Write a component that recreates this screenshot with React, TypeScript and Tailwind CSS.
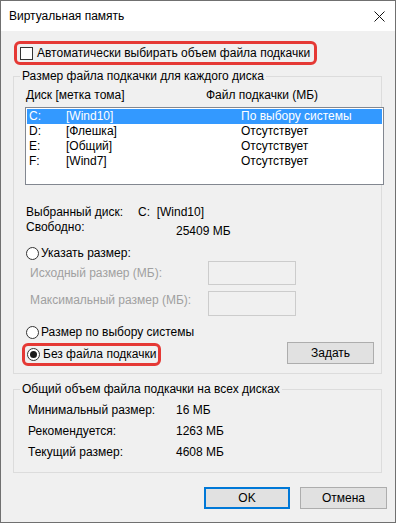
import React from "react";

function Radio({ checked = false }: { checked?: boolean }) {
  return (
    <span className="w-[13px] h-[13px] rounded-full border border-[#333333] bg-white flex items-center justify-center shrink-0">
      {checked && <span className="w-[7px] h-[7px] rounded-full bg-[#1a1a1a]" />}
    </span>
  );
}

const rows = [
  { d: "C:", l: "[Wind10]", f: "По выбору системы", sel: true },
  { d: "D:", l: "[Флешка]", f: "Отсутствует", sel: false },
  { d: "E:", l: "[Общий]", f: "Отсутствует", sel: false },
  { d: "F:", l: "[Wind7]", f: "Отсутствует", sel: false },
];

export default function App() {
  return (
    <div className="w-[396px] h-[523px] bg-[#f0f0f0] border border-[#707070] flex flex-col font-['Liberation_Sans',Arial,sans-serif] text-[12px] leading-[15px] text-black">
      <div className="h-[30px] bg-white flex items-center justify-between pl-[8px] pr-[10px] shrink-0">
        <span>Виртуальная память</span>
        <svg width="11" height="11" viewBox="0 0 11 11">
          <path d="M0.5 0.5 L10.5 10.5 M10.5 0.5 L0.5 10.5" stroke="#111" strokeWidth="1" fill="none" />
        </svg>
      </div>
      <div className="px-[12px] flex flex-col">
        <div className="ml-[1px] mt-[10px] w-[303px] h-[24px] border-[3px] border-[#e53935] rounded-[6px] flex items-center pl-[3px] gap-[4px]">
          <span className="w-[13px] h-[13px] border border-[#333333] bg-white shrink-0" />
          <span>Автоматически выбирать объем файла подкачки</span>
        </div>

        <fieldset className="mt-[4px] w-[369px] min-w-0 border border-[#dcdcdc] flex flex-col pb-[7px]">
          <legend className="ml-[6px] px-[2px] leading-[15px]">Размер файла подкачки для каждого диска</legend>
          <div className="mt-[4px] h-[15px] flex">
            <span className="ml-[12px] w-[180px]">Диск [метка тома]</span>
            <span>Файл подкачки (МБ)</span>
          </div>
          <div className="mt-[4px] ml-[11px] w-[359px] h-[78px] shrink-0 border border-[#828790] bg-white p-[1px] flex flex-col">
            {rows.map((r) => (
              <div
                key={r.d}
                className={
                  "h-[15px] flex items-center pl-[2px] " +
                  (r.sel ? "bg-[#3399ff] text-white" : "")
                }
              >
                <span className="w-[37px]">{r.d}</span>
                <span className="w-[175px]">{r.l}</span>
                <span>{r.f}</span>
              </div>
            ))}
          </div>

          <div className="mt-[20px] h-[15px] flex pl-[12px]">
            <span className="w-[112px]">Выбранный диск:</span>
            <span className="whitespace-pre">C:  [Wind10]</span>
          </div>
          <div className="flex items-start pl-[12px]">
            <span className="w-[150px]">Свободно:</span>
            <span className="pt-[4px]">25409 МБ</span>
          </div>

          <div className="mt-[7px] h-[15px] flex items-center pl-[12px] gap-[2px]">
            <Radio />
            <span>Указать размер:</span>
          </div>
          <div className="flex items-start pl-[16px]">
            <span className="w-[178px] pt-[5px] text-[#a0a0a0]">Исходный размер (МБ):</span>
            <span className="w-[88px] h-[24px] border border-[#cccccc] bg-[#f0f0f0]" />
          </div>
          <div className="mt-[6px] flex items-start pl-[16px]">
            <span className="w-[178px] pt-[2px] text-[#a0a0a0]">Максимальный размер (МБ):</span>
            <span className="w-[88px] h-[25px] border border-[#cccccc] bg-[#f0f0f0]" />
          </div>

          <div className="mt-[9px] h-[15px] flex items-center pl-[12px] gap-[2px]">
            <Radio />
            <span>Размер по выбору системы</span>
          </div>
          <div className="mt-[2px] flex items-start">
            <div className="ml-[8px] mt-[1px] w-[139px] h-[23px] border-[3px] border-[#e53935] rounded-[6px] flex items-center pl-[2px] gap-[3px]">
              <Radio checked />
              <span>Без файла подкачки</span>
            </div>
            <button className="ml-auto mr-[7px] w-[87px] h-[22px] border border-[#adadad] bg-[#e1e1e1] flex items-center justify-center">
              Задать
            </button>
          </div>
        </fieldset>

        <fieldset className="mt-[8px] w-[369px] min-w-0 border border-[#dcdcdc] flex flex-col pb-[10px]">
          <legend className="ml-[6px] px-[2px] leading-[15px]">Общий объем файла подкачки на всех дисках</legend>
          <div className="mt-[3px] flex flex-col gap-[1px]">
            {[
              ["Минимальный размер:", "16 МБ"],
              ["Рекомендуется:", "1263 МБ"],
              ["Текущий размер:", "4608 МБ"],
            ].map(([a, b]) => (
              <div key={a} className="h-[20px] flex items-center pl-[14px]">
                <span className="w-[148px]">{a}</span>
                <span>{b}</span>
              </div>
            ))}
          </div>
        </fieldset>
      </div>

      <div className="mt-[14px] flex justify-end gap-[10px] pr-[8px]">
        <button className="w-[86px] h-[22px] border-2 border-[#0078d7] bg-[#e1e1e1] flex items-center justify-center">
          OK
        </button>
        <button className="w-[87px] h-[22px] border border-[#adadad] bg-[#e1e1e1] flex items-center justify-center">
          Отмена
        </button>
      </div>
    </div>
  );
}
